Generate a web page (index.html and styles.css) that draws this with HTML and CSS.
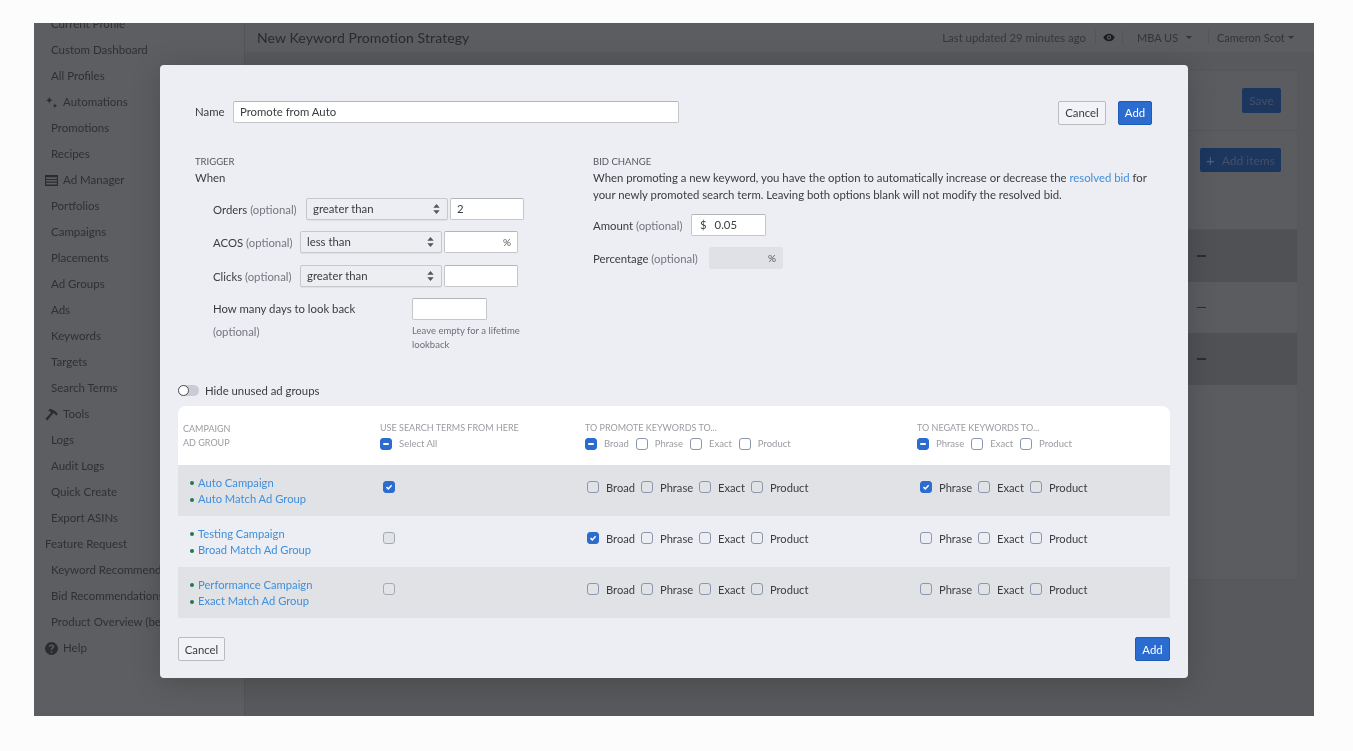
FILE: index.html
```html
<!DOCTYPE html>
<html lang="en">
<head>
<meta charset="utf-8">
<title>New Keyword Promotion Strategy</title>
<link rel="stylesheet" href="styles.css">
</head>
<body>
<div class="stage">
  <aside class="side">
    <a class="nav sub">Current Profile</a>
    <a class="nav sub">Custom Dashboard</a>
    <a class="nav sub">All Profiles</a>
    <a class="nav head"><svg class="ni" viewBox="0 0 12 12"><path d="M4 1l.9 2.100L7 4 4.900 4.900 4 7 3.100 4.900 1 4l2.100-.9zM9.200 7l.6 1.400 1.400.6-1.400.6-.6 1.400-.6-1.400L7.200 9l1.400-.6z"/></svg>Automations</a>
    <a class="nav sub">Promotions</a>
    <a class="nav sub">Recipes</a>
    <a class="nav head"><svg class="ni" viewBox="0 0 12 12"><path d="M0 1h12v10H0zM1 3v1.500h10V3zm0 2.500V7h10V5.500zM1 8v1.800h10V8z" fill-rule="evenodd"/></svg>Ad Manager</a>
    <a class="nav sub">Portfolios</a>
    <a class="nav sub">Campaigns</a>
    <a class="nav sub">Placements</a>
    <a class="nav sub">Ad Groups</a>
    <a class="nav sub">Ads</a>
    <a class="nav sub">Keywords</a>
    <a class="nav sub">Targets</a>
    <a class="nav sub">Search Terms</a>
    <a class="nav head"><svg class="ni" viewBox="0 0 12 12"><path d="M5 .8L9 2.500 12 5.600 10.500 7 8 4.600 7 5.600 2.200 11.600.4 10 5.600 4.400 4 2.500 2.500 2.400z"/></svg>Tools</a>
    <a class="nav sub">Logs</a>
    <a class="nav sub">Audit Logs</a>
    <a class="nav sub">Quick Create</a>
    <a class="nav sub">Export ASINs</a>
    <a class="nav plain">Feature Request</a>
    <a class="nav sub">Keyword Recommendations</a>
    <a class="nav sub">Bid Recommendations</a>
    <a class="nav sub">Product Overview (beta)</a>
    <a class="nav head"><svg class="ni" viewBox="0 0 12 12"><path fill-rule="evenodd" d="M6 0a6 6 0 1 1 0 12A6 6 0 0 1 6 0zM5.300 8.500v1.400h1.400V8.500zM6 2.200c-1.300 0-2.300.8-2.400 2.100h1.300c.1-.6.5-.9 1.100-.9s1 .3 1 .8c0 .4-.2.700-.7 1-.7.5-1 1-1 1.900h1.400c0-.6.200-.9.700-1.200.7-.5 1-1 1-1.800C8.400 3 7.400 2.200 6 2.200z"/></svg>Help</a>
  </aside>
  <main class="main">
    <header class="top">
      <h1 class="title">New Keyword Promotion Strategy</h1>
      <span class="updated">Last updated 29 minutes ago</span>
      <span class="tsec eye"><svg class="eyei" viewBox="0 0 14 10"><path fill-rule="evenodd" d="M7 .5c3 0 5.400 2 6.600 4.500C12.400 7.500 10 9.500 7 9.500S1.600 7.500.4 5C1.600 2.500 4 .5 7 .5zm0 2a2.500 2.500 0 1 0 0 5 2.500 2.500 0 0 0 0-5z"/><circle cx="7" cy="5" r="1.300"/></svg></span>
      <span class="tsec mba">MBA US<i class="caret wide"></i></span>
      <span class="tsec user">Cameron Scot<i class="caret"></i></span>
    </header>
    <section class="bgcard">
      <div class="bgrow one"><span class="bgbtn save">Save</span></div>
      <div class="bgrow two"><span class="bgbtn items"><b class="plus">+</b>Add items</span></div>
      <div class="bgline dk"><span class="dash"></span></div>
      <div class="bgline"><span class="dash"></span></div>
      <div class="bgline dk"><span class="dash"></span></div>
    </section>
  </main>

  <div class="modal">
    <div class="namerow">
      <label class="lbl">Name</label>
      <div class="field namefield">Promote from Auto</div>
      <button class="btn cancel push">Cancel</button>
      <button class="btn add">Add</button>
    </div>

    <div class="cols">
      <div class="trigger">
        <div class="cap">TRIGGER</div>
        <div class="when">When</div>
        <div class="cond first"><span>Orders <em>(optional)</em></span><span class="sel">greater than<svg class="updown" viewBox="0 0 7 11"><path d="M3.500 0L7 4H0zM3.500 11L0 7h7z"/></svg></span><span class="field num">2</span></div>
        <div class="cond"><span>ACOS <em>(optional)</em></span><span class="sel">less than<svg class="updown" viewBox="0 0 7 11"><path d="M3.500 0L7 4H0zM3.500 11L0 7h7z"/></svg></span><span class="field num end"><small>%</small></span></div>
        <div class="cond"><span>Clicks <em>(optional)</em></span><span class="sel">greater than<svg class="updown" viewBox="0 0 7 11"><path d="M3.500 0L7 4H0zM3.500 11L0 7h7z"/></svg></span><span class="field num"></span></div>
        <div class="look">
          <div class="looktext"><div>How many days to look back</div><div><em>(optional)</em></div></div>
          <div class="lookinput"><span class="field num"></span><p class="hint">Leave empty for a lifetime lookback</p></div>
        </div>
      </div>
      <div class="bid">
        <div class="cap">BID CHANGE</div>
        <p class="desc">When promoting a new keyword, you have the option to automatically increase or decrease the <a class="link">resolved bid</a> for your newly promoted search term. Leaving both options blank will not modify the resolved bid.</p>
        <div class="amount"><span>Amount <em>(optional)</em></span><span class="field num"><b class="cur">$</b>0.05</span></div>
        <div class="amount pct"><span>Percentage <em>(optional)</em></span><span class="field num off"><small>%</small></span></div>
      </div>
    </div>

    <div class="togglerow"><span class="toggle"><i></i></span>Hide unused ad groups</div>

    <div class="table">
      <div class="tr thead">
        <div class="c1h"><div>CAMPAIGN</div><div>AD GROUP</div></div>
        <div><div class="th">USE SEARCH TERMS FROM HERE</div><div class="hopts"><span class="opt"><i class="cb dashbox"></i><span class="w-all">Select All</span></span></div></div>
        <div><div class="th">TO PROMOTE KEYWORDS TO...</div><div class="hopts"><span class="opt"><i class="cb dashbox"></i><span>Broad</span></span><span class="opt"><i class="cb"></i><span>Phrase</span></span><span class="opt"><i class="cb"></i><span>Exact</span></span><span class="opt"><i class="cb"></i><span>Product</span></span></div></div>
        <div><div class="th">TO NEGATE KEYWORDS TO...</div><div class="hopts"><span class="opt"><i class="cb dashbox"></i><span>Phrase</span></span><span class="opt"><i class="cb"></i><span>Exact</span></span><span class="opt"><i class="cb"></i><span>Product</span></span></div></div>
      </div>

      <div class="tr row alt">
        <div class="names"><a class="link dot">Auto Campaign</a><a class="link dot">Auto Match Ad Group</a></div>
        <div class="use"><i class="cb on"><svg viewBox="0 0 12 12"><path d="M3 6.200l2.200 2.100L9.200 4"/></svg></i></div>
        <div class="opts"><span class="opt"><i class="cb"></i><span>Broad</span></span><span class="opt"><i class="cb"></i><span>Phrase</span></span><span class="opt"><i class="cb"></i><span>Exact</span></span><span class="opt"><i class="cb"></i><span>Product</span></span></div>
        <div class="opts neg"><span class="opt"><i class="cb on"><svg viewBox="0 0 12 12"><path d="M3 6.200l2.200 2.100L9.200 4"/></svg></i><span>Phrase</span></span><span class="opt"><i class="cb"></i><span>Exact</span></span><span class="opt"><i class="cb"></i><span>Product</span></span></div>
      </div>
      <div class="tr row">
        <div class="names"><a class="link dot">Testing Campaign</a><a class="link dot">Broad Match Ad Group</a></div>
        <div class="use"><i class="cb fade"></i></div>
        <div class="opts"><span class="opt"><i class="cb on"><svg viewBox="0 0 12 12"><path d="M3 6.200l2.200 2.100L9.200 4"/></svg></i><span>Broad</span></span><span class="opt"><i class="cb"></i><span>Phrase</span></span><span class="opt"><i class="cb"></i><span>Exact</span></span><span class="opt"><i class="cb"></i><span>Product</span></span></div>
        <div class="opts neg"><span class="opt"><i class="cb"></i><span>Phrase</span></span><span class="opt"><i class="cb"></i><span>Exact</span></span><span class="opt"><i class="cb"></i><span>Product</span></span></div>
      </div>
      <div class="tr row alt">
        <div class="names"><a class="link dot">Performance Campaign</a><a class="link dot">Exact Match Ad Group</a></div>
        <div class="use"><i class="cb fade"></i></div>
        <div class="opts"><span class="opt"><i class="cb"></i><span>Broad</span></span><span class="opt"><i class="cb"></i><span>Phrase</span></span><span class="opt"><i class="cb"></i><span>Exact</span></span><span class="opt"><i class="cb"></i><span>Product</span></span></div>
        <div class="opts neg"><span class="opt"><i class="cb"></i><span>Phrase</span></span><span class="opt"><i class="cb"></i><span>Exact</span></span><span class="opt"><i class="cb"></i><span>Product</span></span></div>
      </div>
    </div>

    <div class="foot">
      <button class="btn cancel">Cancel</button>
      <button class="btn add">Add</button>
    </div>
  </div>
</div>
</body>
</html>
```
FILE: styles.css
```css
* { box-sizing: border-box; }
html, body { margin: 0; height: 100%; }
body {
  background: #fcfcfc;
  padding: 23px 39px 0 34px;
  font-family: "Lato", "Noto Sans", sans-serif;
  font-size: 11.35px;
  color: #3a3c40;
  overflow: hidden;
}
.stage {
  position: relative;
  width: 1280px;
  height: 693px;
  display: flex;
  background: #58595c;
  overflow: hidden;
  filter: blur(.3px);
}
.side {
  width: 211px;
  flex: none;
  background: #5d5e61;
  border-right: 1px solid #535457;
  margin-top: -12px;
  display: flex;
  flex-direction: column;
  color: #2f3032;
  font-size: 11.5px;
}
.nav { height: 26px; line-height: 26px; white-space: nowrap; overflow: hidden; display: flex; align-items: center; flex: none; }
.sub { padding-left: 17px; }
.plain { padding-left: 11px; }
.head { padding-left: 11px; }
.ni { width: 13px; height: 13px; margin-right: 5px; fill: #2b2c2e; flex: none; }

.main { flex: 1; display: flex; flex-direction: column; min-width: 0; }
.top {
  height: 29px;
  background: #5c5d61;
  display: flex;
  align-items: center;
  padding: 0 20px 1px 12px;
  flex: none;
  color: #333436;
}
.title { font-size: 14px; font-weight: 400; margin: 0; flex: 1; color: #2a2b2d; letter-spacing: .1px; }
.updated { margin-right: 9px; color: #36373a; }
.tsec { height: 14px; display: flex; align-items: center; border-left: 1px solid #54555a; flex: none; white-space: nowrap; }
.eye { width: 27px; justify-content: center; }
.eyei { width: 12px; height: 9px; fill: #1c1d1f; }
.mba { width: 86px; padding-left: 14px; font-size: 11px; }
.user { width: 86px; padding-left: 8px; font-size: 11px; }
.caret { width: 0; height: 0; flex: none; border-left: 3px solid transparent; border-right: 3px solid transparent; border-top: 3.500px solid #333436; margin-left: 3px; }
.caret.wide { margin-left: 8px; }

.bgcard {
  margin: 18px 16px 0;
  height: 510px;
  background: #5b5c60;
  border: 1px solid #565759;
  border-radius: 3px;
  display: flex;
  flex-direction: column;
  flex: none;
}
.bgrow { display: flex; justify-content: flex-end; padding-right: 16px; }
.bgrow.one { height: 60px; padding-top: 17px; border-bottom: 1px solid #55565a; }
.bgrow.two { height: 99px; padding-top: 17px; border-bottom: 1px solid #55565a; }
.bgbtn { height: 25px; border-radius: 2px; background: #1c365e; color: #44506a; display: flex; align-items: center; justify-content: center; font-size: 12px; }
.save { width: 39px; }
.items { width: 81px; height: 24px; }
.plus { font-weight: 400; font-size: 15px; margin-right: 7px; color: #51607e; }
.bgline { height: 51.500px; display: flex; align-items: center; padding-left: 935px; }
.bgline.dk { background: #505155; }
.dash { width: 9px; height: 1.500px; background: #2c2d30; }

.modal {
  position: absolute;
  left: 126px;
  top: 42px;
  width: 1028px;
  height: 613px;
  background: #eceef3;
  border-radius: 4px;
  box-shadow: 0 4px 30px rgba(0, 0, 0, .18);
  padding: 36px 18px 0;
  display: flex;
  flex-direction: column;
}
em { font-style: normal; color: #74777d; }
.lbl { color: #3a3c40; }
.namerow { display: flex; align-items: flex-start; padding: 0 18px 0 17px; height: 24px; line-height: 22px; }
.namerow .lbl { width: 38px; }
.field {
  background: #fff;
  border: 1px solid #c4c6ca;
  border-top-color: #b2b4b8;
  border-radius: 2px;
  height: 22px;
  line-height: 20px;
  padding: 0 6px;
  display: inline-block;
  color: #3a3c40;
}
.namefield { width: 446px; }
.push { margin-left: auto; }
.btn {
  height: 24px;
  border-radius: 2px;
  font: inherit;
  padding: 0;
  cursor: default;
}
.cancel { width: 48px; background: #f2f3f6; border: 1px solid #b9bbbf; color: #3a3c40; }
.add { width: 34px; background: #2b6cd0; border: 1px solid #1f5cb4; color: #fff; }
.namerow .add { margin-left: 12px; }

.cols { display: flex; margin-top: 30px; padding-left: 17px; }
.trigger { width: 398px; flex: none; }
.cap { font-size: 9.5px; color: #55585e; line-height: 13px; }
.when { line-height: 17px; margin-top: 1px; height: 29px; }
.cond { display: flex; align-items: center; height: 22px; margin: 0 0 12px 18px; }
.cond.first { margin-bottom: 11px; }
.cond > span:first-child { width: 87px; flex: none; }
.cond.first > span:first-child { width: 93px; }
.sel {
  width: 142px;
  height: 22px;
  line-height: 20px;
  background: #eceef2;
  border: 1px solid #c6c8cc;
  border-radius: 2px;
  padding: 0 6px;
  display: flex;
  justify-content: space-between;
  align-items: center;
  margin-right: 2px;
  flex: none;
  box-shadow: 0 1px 1px rgba(0,0,0,.06);
}
.updown { width: 7px; height: 10px; fill: #54565b; margin-right: 1px; }
.num { width: 74px; flex: none; }
.end { text-align: right; }
small { font-size: 10px; color: #54565b; }
.look { display: flex; margin: -1px 0 0 18px; }
.looktext { width: 199px; line-height: 22px; flex: none; }
.looktext > div + div { margin-top: 1px; }
.lookinput { width: 115px; }
.lookinput .num { width: 75px; display: block; }
.hint { margin: 4px 0 0; font-size: 9.500px; line-height: 14px; color: #6d7076; }

.bid { flex: 1; padding-right: 22px; }
.desc { margin: 1px 0 0; line-height: 17px; width: 560px; }
.link { color: #3f8fdc; }
.amount { display: flex; align-items: center; height: 22px; margin-top: 11px; }
.amount > span:first-child { width: 98px; flex: none; }
.amount .field { width: 75px; }
.amount.pct > span:first-child { width: 116px; }
.cur { font-weight: 400; margin: 0 8px 0 2px; }
.amount .off { background: #dfe1e6; border: 0; text-align: right; padding-right: 7px; line-height: 22px; width: 74px; }

.togglerow { display: flex; align-items: center; height: 14px; margin-top: 31px; }
.toggle { width: 21px; height: 11px; border-radius: 6px; background: #c9ccd4; margin-right: 6px; display: flex; }
.toggle i { width: 11px; height: 11px; border-radius: 50%; background: #fff; border: 1px solid #4d4f54; }

.table { margin-top: 9px; display: flex; flex-direction: column; }
.tr { display: grid; grid-template-columns: 202px 205px 332px 253px; }
.thead { height: 59px; background: #fff; border-radius: 8px 8px 0 0; font-size: 9.5px; color: #999ca1; padding-top: 15px; }
.c1h { padding-left: 5px; padding-top: 1px; line-height: 13.500px; font-size: 9px; }
.th { line-height: 13px; font-size: 9px; white-space: nowrap; }
.hopts { display: flex; margin-top: 3.500px; height: 12px; align-items: center; }
.opt { display: inline-flex; align-items: center; }
.opt > span { margin-left: 7px; margin-right: 6px; }
.hopts .opt > span { margin-right: 7px; }
.w-all { width: 50px; }
.cb {
  width: 12px;
  height: 12px;
  border: 1px solid #8b97ad;
  border-radius: 3px;
  display: block;
  flex: none;
  background: transparent;
}
.cb.fade { border-color: #a5a9b2; background: #e2e4e8; }
.cb.dashbox { background: #2b6cd0; border-color: #2b6cd0; position: relative; }
.cb.dashbox::after { content: ""; position: absolute; left: 2px; right: 2px; top: 4px; height: 2px; background: #fff; border-radius: 1px; }
.cb.on { background: #2b6cd0; border-color: #2b6cd0; display: flex; }
.cb.on svg { width: 100%; height: 100%; fill: none; stroke: #fff; stroke-width: 1.800; }
.row { height: 51px; align-items: center; }
.alt { background: #e0e2e6; }
.names { display: flex; flex-direction: column; padding: 1px 0 0 12px; line-height: 16.500px; font-size: 11.200px; }
.dot { position: relative; padding-left: 8px; }
.dot::before { content: ""; position: absolute; left: 0; top: 6.500px; width: 4px; height: 4px; border-radius: 50%; background: #1f7a4d; }
.use { padding-left: 3px; margin-bottom: 7px; }
.opts { display: flex; padding-left: 2px; align-items: center; margin-bottom: 7px; font-size: 11.150px; }
.neg { padding-left: 3px; }
.foot { display: flex; justify-content: space-between; margin-top: 19px; }
.foot .cancel { width: 47px; }
.foot .add { width: 35px; }
```
